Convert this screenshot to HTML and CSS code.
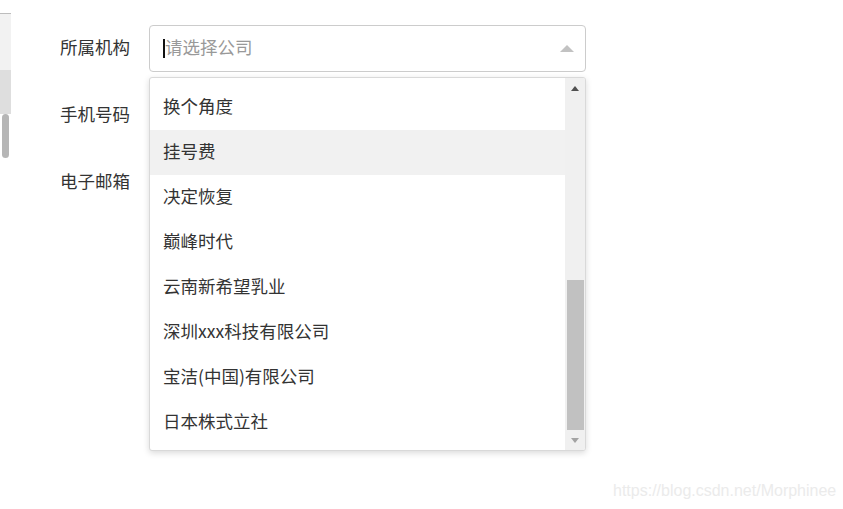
FILE: index.html
```html
<!DOCTYPE html>
<html lang="zh-CN">
<head>
<meta charset="utf-8">
<title>所属机构</title>
<link rel="stylesheet" href="styles.css">
</head>
<body>
<div class="page">
  <div class="side">
    <div class="side-top"></div>
    <div class="side-a"></div>
    <div class="side-b"></div>
    <div class="side-c"><div class="side-thumb"></div></div>
  </div>
  <div class="form">
    <div class="row">
      <div class="label">所属机构</div>
      <div class="select">
        <span class="caret"></span><span class="placeholder">请选择公司</span>
        <span class="arrow"></span>
        <div class="dropdown">
          <ul class="options">
            <li class="option">换个角度</li>
            <li class="option hover">挂号费</li>
            <li class="option">决定恢复</li>
            <li class="option">巅峰时代</li>
            <li class="option">云南新希望乳业</li>
            <li class="option">深圳xxx科技有限公司</li>
            <li class="option">宝洁(中国)有限公司</li>
            <li class="option">日本株式立社</li>
          </ul>
          <div class="scrollbar">
            <div class="sb-btn"><span class="sb-up"></span></div>
            <div class="sb-track"><div class="sb-thumb"></div></div>
            <div class="sb-btn"><span class="sb-down"></span></div>
          </div>
        </div>
      </div>
    </div>
    <div class="row"><div class="label">手机号码</div></div>
    <div class="row"><div class="label">电子邮箱</div></div>
  </div>
</div>
<div class="watermark">https://blog.csdn.net/Morphinee</div>
</body>
</html>
```
FILE: styles.css
```css
html, body {
  margin: 0;
  padding: 0;
  background: #fff;
}
body {
  font-family: "Noto Sans CJK SC", "Noto Sans", sans-serif;
  color: #333;
  width: 843px;
  height: 509px;
  overflow: hidden;
  position: relative;
}
.page {
  display: flex;
}
.side {
  width: 11px;
  display: flex;
  flex-direction: column;
}
.side-top {
  height: 13px;
  border-bottom: 1px solid #bdbdbd;
}
.side-a {
  height: 56px;
  background: #f2f2f2;
}
.side-b {
  height: 44px;
  background: #dedede;
}
.side-c {
  height: 60px;
  display: flex;
  justify-content: center;
}
.side-thumb {
  width: 7px;
  height: 44px;
  border-radius: 4px;
  background: #b6b6b6;
}
.form {
  padding-left: 49px;
  padding-top: 25px;
  display: flex;
  flex-direction: column;
  gap: 20px;
}
.row {
  display: flex;
  align-items: center;
  height: 47px;
}
.label {
  width: 89px;
  font-size: 17.5px;
  color: #333;
  line-height: 1;
  padding-bottom: 3px;
}
.select {
  position: relative;
  box-sizing: border-box;
  width: 437px;
  height: 47px;
  border: 1px solid #cccccc;
  border-radius: 4px;
  display: flex;
  align-items: center;
  padding-left: 13px;
}
.caret {
  width: 2px;
  height: 19px;
  background: #111;
}
.placeholder {
  font-size: 17.5px;
  color: #999;
  line-height: 1;
  padding-bottom: 3px;
}
.arrow {
  position: absolute;
  right: 11px;
  top: 19px;
  width: 0;
  height: 0;
  border-left: 7.5px solid transparent;
  border-right: 7.5px solid transparent;
  border-bottom: 7px solid #c2c2c2;
}
.dropdown {
  position: absolute;
  left: -1px;
  top: 51px;
  width: 437px;
  height: 374px;
  box-sizing: border-box;
  border: 1px solid #d9d9d9;
  border-radius: 3px;
  background: #fff;
  box-shadow: 0 2px 6px rgba(0, 0, 0, 0.15);
  display: flex;
  overflow: hidden;
}
.options {
  list-style: none;
  margin: 0;
  padding: 7px 0 0 0;
  flex: 1;
}
.option {
  box-sizing: border-box;
  height: 45px;
  display: flex;
  align-items: center;
  padding-left: 13px;
  padding-bottom: 3px;
  font-size: 17.5px;
  color: #333;
  line-height: 1;
}
.option.hover {
  background: #f1f1f1;
}
.scrollbar {
  width: 20px;
  background: #f0f0f0;
  display: flex;
  flex-direction: column;
}
.sb-btn {
  height: 20px;
  display: flex;
  align-items: center;
  justify-content: center;
}
.sb-up {
  width: 0;
  height: 0;
  border-left: 4.5px solid transparent;
  border-right: 4.5px solid transparent;
  border-bottom: 5px solid #505050;
}
.sb-down {
  width: 0;
  height: 0;
  border-left: 4.5px solid transparent;
  border-right: 4.5px solid transparent;
  border-top: 5px solid #a3a3a3;
}
.sb-track {
  flex: 1;
  display: flex;
  flex-direction: column;
  justify-content: flex-end;
  padding: 0 1px 0 2px;
}
.sb-thumb {
  height: 150px;
  background: #c1c1c1;
}
.watermark {
  position: absolute;
  left: 613px;
  top: 482px;
  font-family: "Liberation Sans", Arial, sans-serif;
  font-size: 16px;
  color: #ebebeb;
}
```
